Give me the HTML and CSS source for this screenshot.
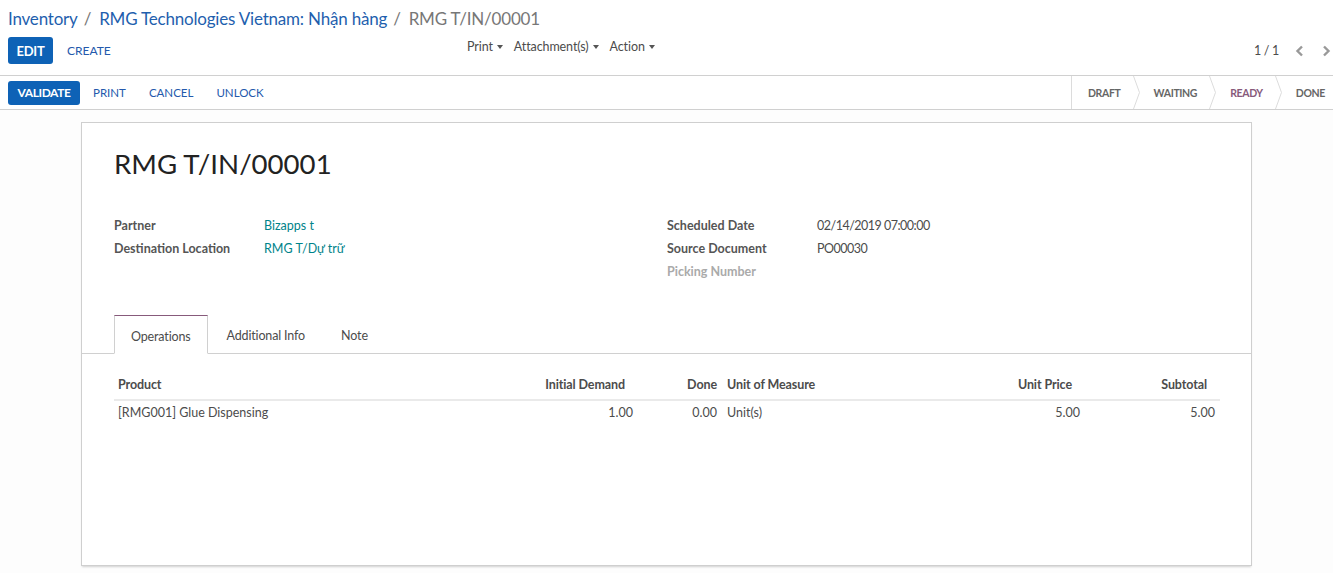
FILE: index.html
```html
<!DOCTYPE html>
<html lang="vi">
<head>
<meta charset="utf-8">
<title>RMG T/IN/00001</title>
<link rel="stylesheet" href="styles.css">
</head>
<body>
<div class="cp">
  <div class="breadcrumb">
    <a class="crumb">Inventory</a><span class="sep">/</span><a class="crumb">RMG Technologies Vietnam: Nhận hàng</a><span class="sep">/</span><span class="crumb current">RMG T/IN/00001</span>
  </div>
  <div class="cp-bottom">
    <div class="cp-buttons">
      <button class="btn btn-primary btn-edit">EDIT</button>
      <button class="btn btn-link">CREATE</button>
    </div>
    <div class="sidebar">
      <span class="dd">Print<i class="caret"></i></span>
      <span class="dd">Attachment(s)<i class="caret"></i></span>
      <span class="dd">Action<i class="caret"></i></span>
    </div>
    <div class="pager">
      <span class="pager-value">1 / 1</span>
      <svg class="pager-arrow" width="9" height="12" viewBox="0 0 9 12"><polyline points="7,1.5 2.5,6 7,10.5" fill="none" stroke="#999" stroke-width="2.4"/></svg>
      <svg class="pager-arrow" width="9" height="12" viewBox="0 0 9 12"><polyline points="2,1.5 6.5,6 2,10.5" fill="none" stroke="#999" stroke-width="2.4"/></svg>
    </div>
  </div>
</div>

<div class="header-row">
  <div class="header-actions">
    <button class="btn btn-primary btn-validate">VALIDATE</button>
    <button class="btn btn-link btn-sm">PRINT</button>
    <button class="btn btn-link btn-sm">CANCEL</button>
    <button class="btn btn-link btn-sm">UNLOCK</button>
  </div>
  <div class="statusbar">
    <div class="status first"><span>DRAFT</span><svg class="chev" width="7" height="33" viewBox="0 0 7 33"><polyline points="0.5,0 6.5,16.5 0.5,33" fill="none" stroke="#dcdcdc" stroke-width="1"/></svg></div>
    <div class="status"><span>WAITING</span><svg class="chev" width="7" height="33" viewBox="0 0 7 33"><polyline points="0.5,0 6.5,16.5 0.5,33" fill="none" stroke="#dcdcdc" stroke-width="1"/></svg></div>
    <div class="status active"><span>READY</span><svg class="chev" width="7" height="33" viewBox="0 0 7 33"><polyline points="0.5,0 6.5,16.5 0.5,33" fill="none" stroke="#dcdcdc" stroke-width="1"/></svg></div>
    <div class="status last"><span>DONE</span></div>
  </div>
</div>

<div class="form-bg">
  <div class="sheet">
    <h1 class="title">RMG T/IN/00001</h1>
    <div class="groups">
      <div class="group">
        <div class="label">Partner</div><div class="value link">Bizapps t</div>
        <div class="label">Destination Location</div><div class="value link">RMG T/Dự trữ</div>
      </div>
      <div class="group">
        <div class="label">Scheduled Date</div><div class="value digits">02/14/2019 07:00:00</div>
        <div class="label">Source Document</div><div class="value digits">PO00030</div>
        <div class="label muted">Picking Number</div><div class="value"></div>
      </div>
    </div>
    <div class="notebook">
      <div class="tabs">
        <span class="tab active">Operations</span>
        <span class="tab">Additional Info</span>
        <span class="tab">Note</span>
      </div>
      <div class="tab-pane">
        <table class="list">
          <colgroup>
            <col class="c-product"><col class="c-demand"><col class="c-done"><col class="c-uom"><col class="c-price"><col class="c-sub">
          </colgroup>
          <thead>
            <tr>
              <th class="left">Product</th>
              <th class="num sort">Initial Demand</th>
              <th class="num">Done</th>
              <th class="left">Unit of Measure</th>
              <th class="num sort">Unit Price</th>
              <th class="num sort">Subtotal</th>
            </tr>
          </thead>
          <tbody>
            <tr>
              <td class="left">[RMG001] Glue Dispensing</td>
              <td class="num">1.00</td>
              <td class="num">0.00</td>
              <td class="left">Unit(s)</td>
              <td class="num">5.00</td>
              <td class="num">5.00</td>
            </tr>
          </tbody>
        </table>
      </div>
    </div>
  </div>
</div>
</body>
</html>
```

FILE: styles.css
```css
* { box-sizing: border-box; }
html, body { margin: 0; padding: 0; }
body {
  font-family: Lato, "Liberation Sans", sans-serif;
  font-size: 13px;
  color: #4c4c4c;
  background: #fff;
  height: 573px;
  overflow: hidden;
  display: flex;
  flex-direction: column;
}

/* control panel */
.cp {
  padding: 6px 0 10px 8px;
  border-bottom: 1px solid #d0d0d0;
}
.breadcrumb {
  font-size: 17px;
  letter-spacing: -0.2px;
  line-height: 26px;
  height: 26px;
  margin-bottom: 5px;
  white-space: nowrap;
}
.crumb { color: #1f5fae; text-decoration: none; }
.crumb.current { color: #777; }
.sep { color: #777; padding: 0 8px 0 6px; }

.cp-bottom {
  display: grid;
  grid-template-columns: 459px 1fr auto;
  align-items: start;
  height: 28px;
}
.cp-buttons { display: flex; align-items: center; }

.btn {
  font-family: inherit;
  border: 0;
  background: none;
  cursor: pointer;
  text-transform: uppercase;
  padding: 0;
  margin: 0;
}
.btn-primary {
  background: #0e62b6;
  color: #fff;
  font-weight: bold;
  border-radius: 3px;
}
.btn-edit {
  font-size: 13px;
  height: 27px;
  width: 45px;
  letter-spacing: -0.3px;
}
.btn-link {
  color: #2459ac;
  font-size: 12px;
  padding: 0 14px;
  height: 27px;
}

.sidebar {
  display: flex;
  gap: 11px;
  line-height: 20px;
  color: #4c4c4c;
  font-size: 12.5px;
  letter-spacing: -0.1px;
}
.dd { display: inline-flex; align-items: center; }
.caret {
  display: inline-block;
  width: 0; height: 0;
  margin-left: 4px;
  border-left: 3px solid transparent;
  border-right: 3px solid transparent;
  border-top: 4px solid #555;
}

.pager {
  display: flex;
  align-items: center;
  height: 27px;
  padding-right: 2px;
}
.pager-value { margin-right: 16px; font-size: 12.5px; letter-spacing: -0.3px; }
.pager-arrow + .pager-arrow { margin-left: 18px; }

/* header / statusbar */
.header-row {
  display: flex;
  justify-content: space-between;
  align-items: stretch;
  height: 34px;
  border-bottom: 1px solid #d0d0d0;
}
.header-actions {
  display: flex;
  align-items: center;
  padding-left: 8px;
}
.btn-validate {
  font-size: 12px;
  height: 24px;
  width: 72px;
  letter-spacing: -0.4px;
}
.btn-sm { font-size: 11.5px; height: 24px; padding: 0 11.5px; }
.btn-validate + .btn-sm { padding-left: 13px; }

.statusbar {
  display: flex;
  border-left: 1px solid #dcdcdc;
  height: 33px;
}
.status {
  display: flex;
  align-items: center;
  padding-left: 14px;
  font-size: 10.5px;
  letter-spacing: -0.35px;
  font-weight: bold;
  color: #666;
}
.status.first { padding-left: 16px; }
.status.last { padding-right: 8px; }
.status.active { color: #875a7b; }
.status span { margin-right: 12px; }
.status.last span { margin-right: 0; }
.chev { display: block; }

/* form */
.form-bg {
  flex: 1;
  padding-top: 12px;
  display: flex;
  justify-content: center;
  background: #fdfdfd;
}
.sheet {
  width: 1171px;
  height: 444px;
  background: #fff;
  border: 1px solid #cfcfcf;
  box-shadow: 0 2px 2px -1px rgba(0,0,0,0.18);
  padding: 24px 31px 0 32px;
}
.title {
  margin: 0;
  font-size: 27.6px;
  line-height: 34px;
  font-weight: normal;
  color: #222;
}
.groups {
  display: grid;
  grid-template-columns: 553px 1fr;
  margin-top: 33px;
}
.group {
  display: grid;
  grid-template-columns: 150px 1fr;
  grid-auto-rows: 23px;
  align-items: center;
}
.label { font-weight: bold; color: #555; font-size: 12.5px; }
.label.muted { color: #aaa; }
.value { color: #4c4c4c; font-size: 12.5px; }
.value.digits { letter-spacing: -0.5px; }
.value.link { color: #00838a; }

.notebook { margin: 32px -31px 0 -32px; }
.tabs {
  display: flex;
  padding-left: 32px;
  border-bottom: 1px solid #d0d0d0;
  height: 39px;
}
.tab {
  display: flex;
  align-items: center;
  padding: 1px 16px 0 18px;
  margin-bottom: -1px;
  border: 1px solid transparent;
  color: #4c4c4c;
  font-size: 12.5px;
  letter-spacing: -0.15px;
}
.tab.active {
  border-color: #d0d0d0;
  border-top-color: #875a7b;
  border-bottom-color: #fff;
  background: #fff;
  padding: 3px 16px 0 16px;
}
.tab-pane { padding: 15px 31px 0 32px; }

.list {
  width: 100%;
  border-collapse: collapse;
  table-layout: fixed;
}
.c-product { width: 416px; }
.c-demand { width: 108px; }
.c-done { width: 84px; }
.c-uom { width: 238px; }
.c-price { width: 125px; }
.c-sub { width: 135px; }
.list th {
  font-weight: bold;
  height: 31px;
  padding: 0 5px;
  border-bottom: 2px solid #eaeaea;
  font-size: 12.5px;
  letter-spacing: -0.1px;
  white-space: nowrap;
}
.list td {
  height: 23px;
  padding: 0 5px;
  font-size: 12.5px;
  white-space: nowrap;
}
.list .left { text-align: left; }
.list .num { text-align: right; }
.list th.sort { padding-right: 13px; }
.list th:first-child, .list td:first-child { padding-left: 4px; }
```
